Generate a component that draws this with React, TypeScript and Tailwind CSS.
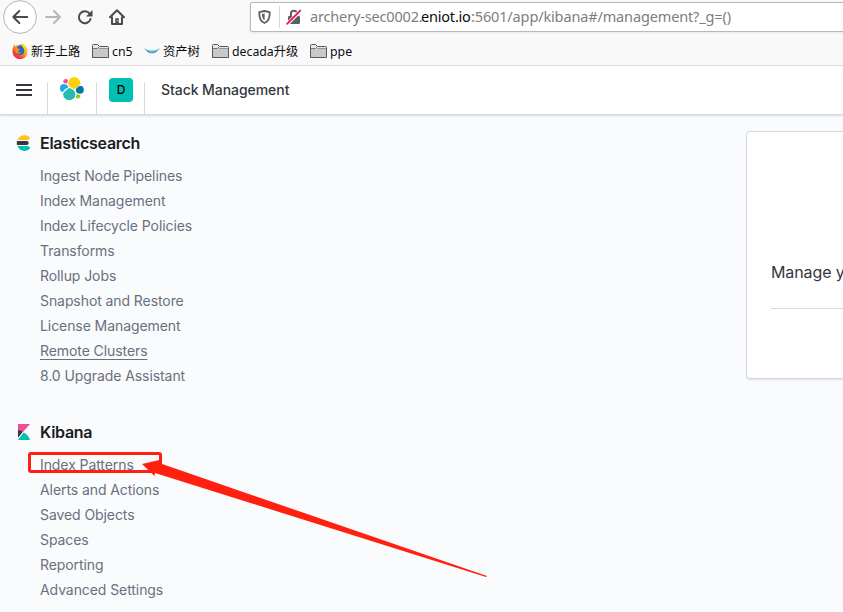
import React from "react";

const UI = "font-['Noto_Sans','Noto_Sans_CJK_SC',sans-serif]";

function BackIcon() {
  return (
    <svg width="34" height="34" viewBox="0 0 34 34" className="shrink-0">
      <circle cx="17" cy="17" r="16.4" fill="#fff" stroke="#b4b4b6" strokeWidth="1" />
      <path d="M24.3 17H10.5M16.3 11L10.3 17l6 6" fill="none" stroke="#4a4a4f" strokeWidth="2" strokeLinecap="round" strokeLinejoin="round" />
    </svg>
  );
}

function ForwardIcon() {
  return (
    <svg width="16" height="16" viewBox="0 0 16 16">
      <path d="M1 8h14M9 2l6 6-6 6" fill="none" stroke="#b7b7b9" strokeWidth="2" strokeLinecap="round" strokeLinejoin="round" />
    </svg>
  );
}

function ReloadIcon() {
  return (
    <svg width="16" height="16" viewBox="0 0 16 16">
      <path d="M12.6 4.5A6 6 0 1 0 13.6 10" fill="none" stroke="#4a4a4f" strokeWidth="2" strokeLinecap="round" />
      <path d="M15.5 1v6.5H9z" fill="#4a4a4f" />
    </svg>
  );
}

function HomeIcon() {
  return (
    <svg width="16" height="16" viewBox="0 0 16 16">
      <path d="M1 8.2L8 1.3l7 6.9" fill="none" stroke="#4a4a4f" strokeWidth="2" strokeLinecap="round" strokeLinejoin="round" />
      <path d="M3 7.5V15h10V7.5" fill="none" stroke="#4a4a4f" strokeWidth="2" strokeLinejoin="round" />
      <path d="M6.3 9.2h3.4V14H6.3z" fill="#4a4a4f" />
      <path d="M7.7 11.2h1v1h-1z" fill="#fff" />
    </svg>
  );
}

function ShieldIcon() {
  return (
    <svg width="13" height="14" viewBox="0 0 13 14">
      <path d="M6.5 1L11.7 2.2c.2 5.2-.7 9-5.2 10.8C2 11.2 1.100 7.400 1.300 2.200z" fill="none" stroke="#5e5e62" strokeWidth="1.800" strokeLinejoin="round" />
      <path d="M6.600 3.500v6.800C4.600 9.100 3.900 7 3.900 4.100z" fill="#5e5e62" />
    </svg>
  );
}

function LockIcon() {
  return (
    <svg width="16" height="16" viewBox="0 0 16 16">
      <path d="M4.900 8V4.800a3.100 3.100 0 0 1 6.200 0V8" fill="none" stroke="#5e5e62" strokeWidth="2" />
      <rect x="2" y="7" width="12" height="8" rx="1.200" fill="#5e5e62" />
      <path d="M.8 15.500L14.500 1.800" stroke="#fff" strokeWidth="3.600" />
      <path d="M1.300 14.700L14.200 1.600" stroke="#f5134f" strokeWidth="1.900" strokeLinecap="round" />
    </svg>
  );
}

function FirefoxIcon() {
  return (
    <svg width="16" height="16" viewBox="0 0 16 16">
      <defs>
        <linearGradient id="fox" x1="0.85" y1="0.1" x2="0.2" y2="0.9">
          <stop offset="0" stopColor="#ffe226" />
          <stop offset="0.45" stopColor="#ff9a1c" />
          <stop offset="0.75" stopColor="#fb4a2c" />
          <stop offset="1" stopColor="#f0205e" />
        </linearGradient>
      </defs>
      <path d="M1.500 3.200L2.200 1.600l1.600 1.700C4.600 1.600 6 1.300 7 2L10 .6c3.300 1.200 5.600 4.300 5.500 8A7.500 7.500 0 0 1 .5 8.800C.3 6.500.7 4.600 1.500 3.200z" fill="url(#fox)" />
      <path d="M5 4.300C6 3 8.200 1.700 9.300 2c.4 2 3 2.800 3 5.800A4.200 4.200 0 0 1 4 8.800z" fill="#2467c9" />
      <path d="M3.200 5.300c1.200-.5 2.300-.3 3.400.5l1.400.4c-.3 1.200-1.800 1.200-2 2 .2 1.500 2 1.600 3.300.8-.5 2.300-4.600 2.700-6-.7z" fill="#ff8b1a" />
    </svg>
  );
}

function FolderIcon() {
  return (
    <svg width="17" height="15" viewBox="0 0 17 15">
      <path d="M.5 13.500V1.500Q.5.500 1.500.500H5.500L7.500 2.500H15.500Q16.500 2.500 16.500 3.500V13.500Z" fill="#e8e8e8" stroke="#58585b" />
      <path d="M1 4.500H16V13H1z" fill="#c9c9ca" />
      <path d="M1 4.500H5.500L7.500 2.500" fill="none" stroke="#77777a" />
      <path d="M7 4.500H16" stroke="#98989a" />
    </svg>
  );
}

function SwooshIcon() {
  return (
    <svg width="16" height="8" viewBox="0 0 16 8">
      <path d="M0 1C4 4.200 12 4.200 16 1 12.500 8 4 8.300 0 1z" fill="#65b9cf" />
      <path d="M3.500 4.600q4.500 2.600 9 0" fill="none" stroke="#218ca8" strokeDasharray="1.500 1" />
    </svg>
  );
}

function ElasticLogo() {
  return (
    <svg width="24" height="24" viewBox="0 0 24 24">
      <circle cx="14.200" cy="6.300" r="6.200" fill="#fed10a" />
      <circle cx="4.100" cy="11.200" r="4.100" fill="#1ba9e5" />
      <circle cx="5.800" cy="4.600" r="2.500" fill="#ef5098" />
      <circle cx="19.800" cy="12.800" r="4" fill="#07a" />
      <circle cx="17.900" cy="19" r="2.500" fill="#93c83e" />
      <circle cx="9.300" cy="17.200" r="6.700" fill="#fff" />
      <circle cx="9.300" cy="17.200" r="6.100" fill="#24bbb1" />
      <path d="M3.200 6.400L7.800 7.300 9.300 10.300 14.300 12.600 16.200 16.400 20.800 17.900M9.300 10.300L2.800 15.900M14.300 12.600L20.200 7.800M7.300 7.200L8.800 2.300M16.200 16.400L15.200 20.900" fill="none" stroke="#fff" strokeWidth="0.900" />
    </svg>
  );
}

function ElasticsearchLogo() {
  return (
    <svg width="16" height="16" viewBox="0 0 16 16" className="shrink-0">
      <path d="M1.300 5C3.300 1 8.400-1.200 12.700 1.500q1 .7 1.700 1.500A4.700 4.700 0 0 1 11 5z" fill="#fec514" />
      <path d="M1 6h9.700a2 2 0 0 1 0 4H1A8 8 0 0 1 1 6z" fill="#343741" />
      <path d="M1.300 11H11q2.200.2 3.400 2C10.300 17.600 3.800 16.600 1.300 11z" fill="#00bfb3" />
    </svg>
  );
}

function KibanaLogo() {
  return (
    <svg width="12" height="16" viewBox="0 0 12 16" className="shrink-0">
      <path d="M0 0H12L4.700 8.300Q2.300 6.300 0 6z" fill="#f04e98" />
      <path d="M5.700 8.500Q10.300 10.800 12 16H0z" fill="#00bfb3" />
      <path d="M0 6v7.700L4.900 7.800Q2.500 6.100 0 6z" fill="#343741" />
    </svg>
  );
}

function Bookmark({ icon, label, className }: { icon: React.ReactNode; label: string; className: string }) {
  return (
    <div className={`flex shrink-0 items-center whitespace-nowrap ${className}`}>
      {icon}
      <span className="ml-[3px] pt-px">{label}</span>
    </div>
  );
}

const elasticsearchLinks = [
  { label: "Ingest Node Pipelines" },
  { label: "Index Management" },
  { label: "Index Lifecycle Policies" },
  { label: "Transforms" },
  { label: "Rollup Jobs" },
  { label: "Snapshot and Restore" },
  { label: "License Management" },
  { label: "Remote Clusters", underlined: true },
  { label: "8.0 Upgrade Assistant" },
];

const kibanaLinks = [
  { label: "Index Patterns" },
  { label: "Alerts and Actions" },
  { label: "Saved Objects" },
  { label: "Spaces" },
  { label: "Reporting" },
  { label: "Advanced Settings" },
];

function NavSection({ title, icon, links }: { title: string; icon: React.ReactNode; links: { label: string; underlined?: boolean }[] }) {
  return (
    <section>
      <h2 className="flex h-6 items-center text-[16px] font-semibold text-[#1a1c21]">
        <span className="flex w-6 shrink-0">{icon}</span>
        <span className="tracking-[-0.28px]">{title}</span>
      </h2>
      <ul className="mt-[8px] pl-6 text-[14px] tracking-[-0.08px] text-[#69707d]">
        {links.map((link) => (
          <li key={link.label} className="flex h-[25px] items-center whitespace-nowrap">
            <span className={link.underlined ? "underline underline-offset-[3px]" : ""}>{link.label}</span>
          </li>
        ))}
      </ul>
    </section>
  );
}

export default function App() {
  return (
    <div className="relative flex h-[612px] w-[843px] flex-col overflow-hidden bg-[#fafbfd] font-['Inter',sans-serif]">
      <div className={`flex h-[66px] shrink-0 flex-col border-b border-[#dedee0] bg-[#f9f9fa] ${UI}`}>
        <div className="flex h-[34px] items-center pl-[3px]">
          <BackIcon />
          <div className="ml-2 flex w-[80px] shrink-0 items-center justify-between">
            <ForwardIcon />
            <ReloadIcon />
            <HomeIcon />
          </div>
          <div className="ml-[125px] flex h-[30px] w-[600px] shrink-0 items-center rounded-l-[2px] border border-[#b8b8ba] bg-white pl-[7px] shadow-[0_1px_3px_rgba(0,0,0,0.08)]">
            <ShieldIcon />
            <div className="ml-2 h-[22px] w-px bg-[#d7d7db]" />
            <div className="ml-[6px]"><LockIcon /></div>
            <div className="mb-[2px] ml-[8px] flex whitespace-nowrap text-[14.5px] leading-5 text-[#7d7d80]">
              <span className="w-[111px] tracking-[-0.16px]">archery-sec0002.</span>
              <span className="w-[50px] tracking-[-0.2px] text-[#0c0c0d]">eniot.io</span>
              <span className="tracking-[-0.14px]">:5601/app/kibana#/management?_g=()</span>
            </div>
          </div>
        </div>
        <div className="flex h-[34px] shrink-0 items-center pl-3 text-[12.3px] leading-4 text-[#0c0c0d]">
          <Bookmark icon={<FirefoxIcon />} label="新手上路" className="w-[80px]" />
          <Bookmark icon={<FolderIcon />} label="cn5" className="w-[52px]" />
          <Bookmark icon={<SwooshIcon />} label="资产树" className="w-[68px]" />
          <Bookmark icon={<FolderIcon />} label="decada升级" className="w-[98px]" />
          <Bookmark icon={<FolderIcon />} label="ppe" className="w-[60px]" />
        </div>
      </div>

      <header className="z-10 flex h-[49px] shrink-0 items-center border-b border-[#d3dae6] bg-white shadow-[0_1px_2px_rgba(152,162,179,0.35)]">
        <div className="flex h-12 w-12 items-end">
          <div className="flex h-12 w-[47px] items-center pl-4">
            <div className="flex flex-col gap-[3px]">
              <div className="h-[2px] w-4 bg-[#343741]" />
              <div className="h-[2px] w-4 bg-[#343741]" />
              <div className="h-[2px] w-4 bg-[#343741]" />
            </div>
          </div>
          <div className="h-8 w-px bg-[#d3dae6]" />
        </div>
        <div className="flex h-12 w-[49px] items-end">
          <div className="flex h-12 w-12 items-start pl-3 pt-[11px]"><ElasticLogo /></div>
          <div className="h-8 w-px bg-[#d3dae6]" />
        </div>
        <div className="flex h-12 w-12 items-end">
          <div className="flex h-12 w-[47px] items-center pl-3">
            <div className="flex size-6 items-center justify-center rounded-[4px] bg-[#00bfb3] text-[12px] font-medium text-black">D</div>
          </div>
          <div className="h-8 w-px bg-[#d3dae6]" />
        </div>
        <h1 className="mb-[2px] ml-4 whitespace-nowrap text-[14px] font-medium tracking-[-0.06px] text-[#343741]">Stack Management</h1>
      </header>

      <main className="flex min-h-0 flex-1 justify-between">
        <nav className="flex w-[240px] shrink-0 flex-col gap-[32px] pl-4 pt-4">
          <NavSection title="Elasticsearch" icon={<ElasticsearchLogo />} links={elasticsearchLinks} />
          <NavSection title="Kibana" icon={<span className="pl-[2px]"><KibanaLogo /></span>} links={kibanaLinks} />
        </nav>
        <div className="mt-4 h-[248px] w-[97px] shrink-0 overflow-hidden rounded-l-[4px] border border-r-0 border-[#d3dae6] bg-white pl-6 pt-[128px] shadow-[0_2px_2px_-1px_rgba(152,162,179,0.3)]">
          <p className="h-[49px] whitespace-nowrap border-b border-[#d3dae6] text-[16px] leading-6 tracking-[-0.1px] text-[#343741]">Manage y</p>
        </div>
      </main>

      <div className="absolute left-[28px] top-[452px] h-[21px] w-[134px] rounded-[3px] border-[3px] border-[#ff2010]" />
      <svg className="absolute left-[140px] top-[454px] z-20" width="350" height="126" viewBox="140 454 350 126">
        <path d="M142 464L161.500 459.500 160 463.300 487 576 486 577 155 473 154.500 476z" fill="#ff2010" />
      </svg>
    </div>
  );
}
